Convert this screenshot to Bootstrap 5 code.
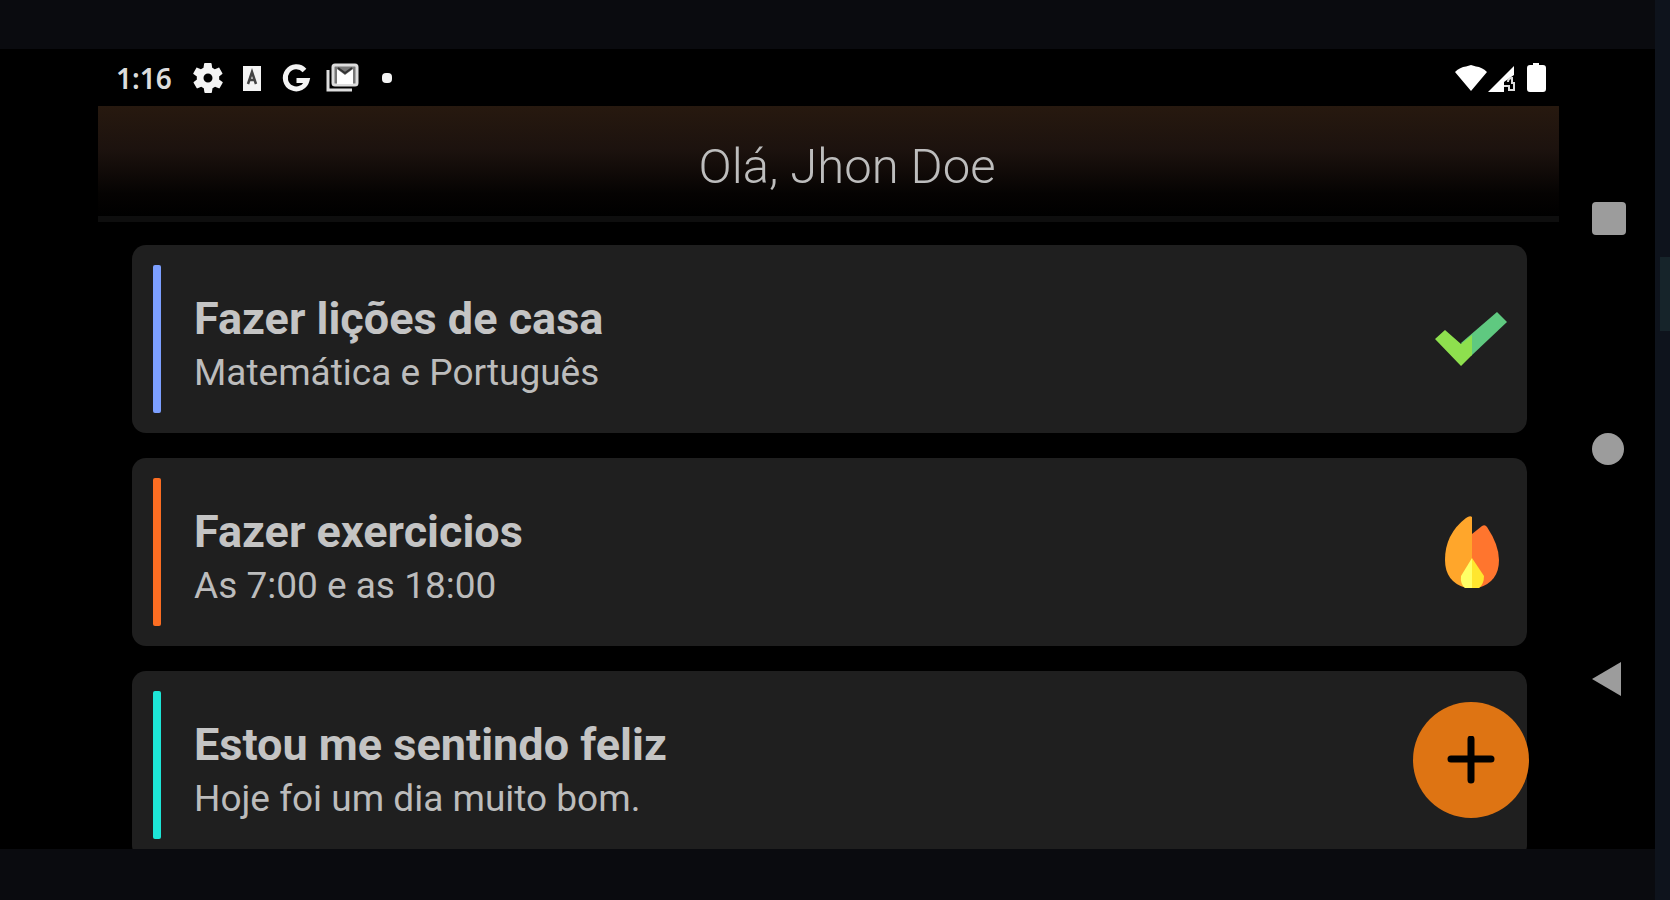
<!DOCTYPE html>
<html lang="pt-BR">
<head>
<meta charset="utf-8">
<meta name="viewport" content="width=device-width, initial-scale=1">
<title>Tarefas</title>
<link href="https://cdn.jsdelivr.net/npm/bootstrap@5.3.0/dist/css/bootstrap.min.css" rel="stylesheet">
<style>
body { background: #0a0b0f; color: #c4c4c4; font-family: Roboto, "Liberation Sans", sans-serif; }
.stage { padding: 49px 0 51px; }
.device { background: #000; padding-left: 98px; }
.side-strip { width: 15px; background: #0e131c; padding-top: 257px; }
.side-mark { width: 10px; height: 74px; background: #16242a; }
.status-bar { height: 57px; padding: 0 11px 0 18px; color: #f4f4f4; }
.clock { font: 600 28px/32px "Noto Sans", sans-serif; color: #dcdcdc; width: 77px; }
.status-icons { gap: 14px; }
.greeting { height: 116px; padding: 12px 0 0 37px; border-bottom: 6px solid #0e0e0e; background: linear-gradient(#27190f, #1c120e 40%, #050302 80%, #000); }
.greeting h1 { font-size: 49px; line-height: 56px; font-weight: 300; color: #bdbdbd; }
.tasks { padding: 23px 32px 0 34px; gap: 25px; }
.task { height: 188px; padding: 20px; background: #1f1f1f; border-radius: 14px; }
.task-bar { width: 8px; border-radius: 2px; margin: 0 33px 0 1px; }
.bar-study { background: #7c9fff; }
.bar-sport { background: #fb6d22; }
.bar-mood { background: #1de5d6; }
.task-text { padding-top: 12px; }
.task h2 { font-size: 45px; line-height: 56px; font-weight: 700; color: #c4c4c4; }
.task p { font-size: 37px; line-height: 52px; color: #bcbcbc; }
.fab { right: 30px; bottom: 31px; width: 116px; height: 116px; background: #de7413; }
.fab:hover { background: #ee8423; }
.nav-rail { width: 96px; gap: 196px; padding-left: 4px; }
</style>
</head>
<body>
<div class="d-flex vh-100">
  <div class="stage flex-grow-1 d-flex">
    <div class="device flex-grow-1 d-flex">
      <main class="flex-grow-1 d-flex flex-column overflow-hidden position-relative">
        <div class="status-bar d-flex align-items-center flex-shrink-0">
          <span class="clock">1:16</span>
          <div class="status-icons d-flex align-items-center">
            <svg width="30" height="32" viewBox="2 1.5 20 21" fill="currentColor" aria-hidden="true"><path d="M19.4 13c.1-.6.1-1.400 0-2l2.100-1.600c.2-.2.2-.4.100-.6l-2-3.500c-.1-.2-.4-.3-.6-.2l-2.500 1c-.5-.4-1.100-.7-1.700-1l-.4-2.600c0-.3-.2-.5-.5-.5h-4c-.3 0-.4.2-.5.500l-.4 2.600c-.6.300-1.200.6-1.700 1l-2.500-1c-.2-.1-.5 0-.6.200l-2 3.500c-.1.200-.1.500.1.600L4.600 11c-.1.600-.1 1.400 0 2l-2.100 1.600c-.2.200-.2.400-.1.600l2 3.500c.1.200.4.300.6.200l2.500-1c.5.400 1.100.7 1.700 1l.4 2.600c.1.300.2.500.5.500h4c.3 0 .5-.2.500-.5l.4-2.600c.6-.3 1.200-.6 1.700-1l2.500 1c.2.100.5 0 .6-.2l2-3.500c.1-.2.1-.5-.1-.6zM12 15a3 3 0 1 1 0-6 3 3 0 0 1 0 6z"/></svg>
            <svg width="30" height="32" viewBox="0 0 30 32" aria-hidden="true"><path fill="currentColor" d="M6 4h18v25H6z"/><path d="M11 22l4-12 4 12M12 18h6" fill="none" stroke="#444" stroke-width="2.500"/></svg>
            <svg width="30" height="32" viewBox="0 0 30 32" fill="none" stroke="currentColor" stroke-width="5" aria-hidden="true"><path d="M23.500 8.500A11 11 0 1 0 26 18.500H15.500"/></svg>
            <svg width="34" height="32" viewBox="0 0 34 32" fill="none" aria-hidden="true"><path d="M3 8v20h24" stroke="#ddd" stroke-width="3"/><rect x="8" y="3" width="24" height="20" rx="2" fill="#777" stroke="#ddd" stroke-width="3"/><path d="M12 22V7l8 6 8-6v15z" fill="#fff"/><path d="M13 6l7 5 7-5" stroke="#333" stroke-width="2"/></svg>
            <svg width="30" height="32" viewBox="0 0 30 32" fill="currentColor" aria-hidden="true"><rect x="9" y="11" width="10" height="10" rx="4"/></svg>
          </div>
          <svg class="ms-auto" width="94" height="32" viewBox="0 0 94 32" fill="#fff" aria-hidden="true"><path d="M1 10Q6 5 12 4.500L17 3l5 1.500Q28 5 33 10L17 29z"/><path d="M34 30L60 4V13L50 20V30z"/><path d="M54 20q0-4 4-4v5h2v3M50 24h5v4h5v-6" fill="none" stroke="#ddd" stroke-width="2"/><path d="M79 1h6v2h4q3 0 3 3v21q0 3-3 3H76q-3 0-3-3V6q0-3 3-3h3z"/></svg>
        </div>
        <header class="greeting d-flex align-items-center justify-content-center flex-shrink-0">
          <h1 class="m-0">Olá, Jhon Doe</h1>
        </header>
        <section class="tasks d-flex flex-column">
          <article class="task d-flex flex-shrink-0">
            <div class="task-bar bar-study"></div>
            <div class="task-text flex-grow-1 align-self-center">
              <h2 class="m-0">Fazer lições de casa</h2>
              <p class="m-0">Matemática e Português</p>
            </div>
            <svg class="align-self-center" width="72" height="72" viewBox="0 0 72 72" role="img" aria-label="Concluída"><path fill="#5fc980" d="M62 9l10 10-36 34-10-13z"/><path fill="#8ee04e" d="M0 36l10-9 16 14 11-9v20L26 63z"/></svg>
          </article>
          <article class="task d-flex flex-shrink-0">
            <div class="task-bar bar-sport"></div>
            <div class="task-text flex-grow-1 align-self-center">
              <h2 class="m-0">Fazer exercicios</h2>
              <p class="m-0">As 7:00 e as 18:00</p>
            </div>
            <svg class="align-self-center" width="72" height="72" viewBox="0 0 72 72" role="img" aria-label="Em sequência"><path fill="#ff752e" d="M37 18l10-8q3-2 5 1 12 18 12 33 0 22-21 28H37z"/><path fill="#ffa62b" d="M37 1v71h-6Q10 66 10 44 10 18 31 2q4-3 6-1z"/><path fill="#ffff66" d="M37 42L26 60q-1 8 4 12h7z"/><path fill="#ffe62e" d="M37 42l12 18q0 8-5 12h-7z"/></svg>
          </article>
          <article class="task d-flex flex-shrink-0">
            <div class="task-bar bar-mood"></div>
            <div class="task-text flex-grow-1 align-self-center">
              <h2 class="m-0">Estou me sentindo feliz</h2>
              <p class="m-0">Hoje foi um dia muito bom.</p>
            </div>
          </article>
        </section>
        <button type="button" class="fab btn rounded-circle border-0 p-0 position-absolute d-flex align-items-center justify-content-center" aria-label="Adicionar tarefa">
          <svg width="48" height="48" viewBox="0 0 48 48" fill="none" stroke="#000" stroke-width="7" stroke-linecap="round" aria-hidden="true"><path d="M24 3v41M4 23h40"/></svg>
        </button>
      </main>
      <nav class="nav-rail d-flex flex-column align-items-center justify-content-center flex-shrink-0" aria-label="Sistema">
        <button type="button" class="btn border-0 p-0 d-flex" aria-label="Recentes"><svg width="34" height="34" viewBox="0 0 34 34" fill="#9c9c9c"><rect width="34" height="33" rx="4"/></svg></button>
        <button type="button" class="btn border-0 p-0 d-flex" aria-label="Início"><svg width="34" height="34" viewBox="0 0 34 34" fill="#9c9c9c"><circle cx="16" cy="17" r="16"/></svg></button>
        <button type="button" class="btn border-0 p-0 d-flex" aria-label="Voltar"><svg width="34" height="34" viewBox="0 0 34 34" fill="#9c9c9c"><path d="M0 17L29 0v34z"/></svg></button>
      </nav>
    </div>
  </div>
  <aside class="side-strip flex-shrink-0"><div class="side-mark ms-auto"></div></aside>
</div>
<script src="https://cdn.jsdelivr.net/npm/bootstrap@5.3.0/dist/js/bootstrap.bundle.min.js"></script>
</body>
</html>
